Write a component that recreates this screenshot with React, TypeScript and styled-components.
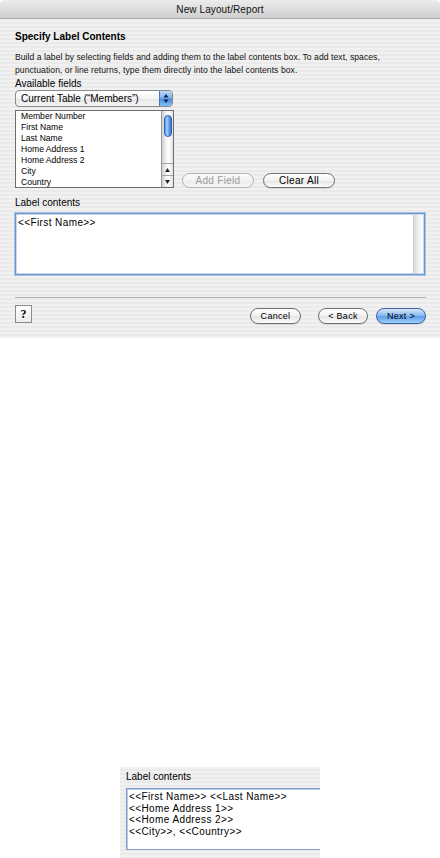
import React from "react";
import styled, { createGlobalStyle, css } from "styled-components";

const Global = createGlobalStyle`
  html, body { margin: 0; padding: 0; background: #ffffff; }
  body { font-family: "Liberation Sans", Arial, sans-serif; color: #000; }
  #root { width: 440px; }
`;

const stripes = css`
  background: repeating-linear-gradient(
    to bottom,
    #f1f1f1 0px,
    #f1f1f1 2px,
    #eaeaea 2px,
    #eaeaea 4px
  );
`;

const Page = styled.div`
  width: 440px;
  height: 858px;
  display: flex;
  flex-direction: column;
  overflow: hidden;
`;

const Dialog = styled.div`
  ${stripes};
  width: 440px;
  height: 338px;
  border-radius: 5px 5px 0 0;
  overflow: hidden;
  display: flex;
  flex-direction: column;
  flex-shrink: 0;
`;

const TitleBar = styled.div`
  height: 18px;
  border-bottom: 1px solid #a9a9a9;
  background: linear-gradient(to bottom, #ececec 0%, #dedede 50%, #cfcfcf 100%);
  display: flex;
  align-items: center;
  justify-content: center;
  font-size: 10px;
  color: #111;
  letter-spacing: 0.1px;
`;

const Body = styled.div`
  padding: 0 14px 0 15px;
  display: flex;
  flex-direction: column;
`;

const Heading = styled.div`
  margin-top: 12px;
  font-size: 10px;
  line-height: 12px;
  font-weight: bold;
  color: #000;
`;

const Description = styled.div`
  margin-top: 8px;
  font-size: 8.6px;
  line-height: 13px;
  color: #111;
  letter-spacing: 0.05px;
`;

const FieldLabel = styled.div<{ $gap: number }>`
  margin-top: ${(p) => p.$gap}px;
  font-size: 10px;
  line-height: 12px;
  color: #000;
`;

const Popup = styled.div`
  margin-top: 0px;
  width: 158px;
  height: 17px;
  box-sizing: border-box;
  border: 1px solid #8a8a8a;
  border-radius: 4px;
  background: linear-gradient(to bottom, #ffffff 0%, #f4f4f4 50%, #e6e6e6 51%, #f6f6f6 100%);
  display: flex;
  align-items: stretch;
  overflow: hidden;
`;

const PopupText = styled.div`
  flex: 1;
  font-size: 10px;
  line-height: 15px;
  padding-left: 5px;
  color: #000;
`;

const PopupArrows = styled.div`
  width: 12px;
  border-left: 1px solid #4a78b8;
  background: linear-gradient(to bottom, #bcd9f8 0%, #7fb1ec 45%, #4c8ee0 55%, #7fc0f8 100%);
  display: flex;
  align-items: center;
  justify-content: center;
`;

const ListRow = styled.div`
  margin-top: 3px;
  display: flex;
  align-items: flex-end;
`;

const ListBox = styled.div`
  width: 159px;
  height: 78px;
  box-sizing: border-box;
  border: 1px solid #6e6e6e;
  background: #fff;
  display: flex;
`;

const ListItems = styled.div`
  flex: 1;
  padding: 0 0 0 5px;
  display: flex;
  flex-direction: column;
`;

const ListItem = styled.div`
  font-size: 8.6px;
  line-height: 11px;
  color: #000;
  white-space: nowrap;
`;

const ScrollTrack = styled.div`
  width: 11px;
  border-left: 1px solid #9a9a9a;
  background: linear-gradient(to right, #d0d0d0 0%, #f4f4f4 40%, #ffffff 60%, #e2e2e2 100%);
  display: flex;
  flex-direction: column;
`;

const ScrollThumbArea = styled.div`
  flex: 1;
  padding: 4px 1px 0 1px;
`;

const ScrollThumb = styled.div`
  width: 8px;
  height: 22px;
  margin: 0 auto;
  box-sizing: border-box;
  border: 1px solid #2d5fae;
  border-radius: 4px;
  background: linear-gradient(to right, #5b96e4 0%, #a8d0fb 35%, #6aa8f0 60%, #2f74d2 100%);
`;

const ScrollArrow = styled.div`
  height: 11px;
  border-top: 1px solid #a6a6a6;
  display: flex;
  align-items: center;
  justify-content: center;
`;

const ButtonGroup = styled.div`
  display: flex;
  gap: 9px;
  margin-left: 8px;
`;

const PillButton = styled.div<{ $w: number; $h: number; $disabled?: boolean; $primary?: boolean; $fs?: number }>`
  width: ${(p) => p.$w}px;
  height: ${(p) => p.$h}px;
  box-sizing: border-box;
  border-radius: ${(p) => p.$h / 2}px;
  border: 1px solid ${(p) => (p.$disabled ? "#b4b4b4" : p.$primary ? "#3c63a3" : "#707070")};
  background: ${(p) =>
    p.$primary
      ? "linear-gradient(to bottom, #d3e6fb 0%, #8dbdf3 45%, #5fa0ec 55%, #9ed0fb 100%)"
      : p.$disabled
      ? "linear-gradient(to bottom, #fbfbfb 0%, #f3f3f3 50%, #ececec 51%, #f6f6f6 100%)"
      : "linear-gradient(to bottom, #ffffff 0%, #f2f2f2 50%, #e4e4e4 51%, #fbfbfb 100%)"};
  box-shadow: ${(p) => (p.$disabled ? "none" : "0 1px 1px rgba(0,0,0,0.12)")};
  display: flex;
  align-items: center;
  justify-content: center;
  font-size: ${(p) => p.$fs ?? 10}px;
  letter-spacing: 0.3px;
  color: ${(p) => (p.$disabled ? "#9c9c9c" : "#000")};
`;

const TextBox = styled.div<{ $h: number }>`
  margin-top: 4px;
  height: ${(p) => p.$h}px;
  box-sizing: border-box;
  border: 1px solid #6f95c8;
  box-shadow: 0 0 0 1px #a9c5ea, inset 0 0 0 1px #c7d8ee;
  background: #fff;
  display: flex;
  width: 410px;
`;

const TextContent = styled.div`
  flex: 1;
  padding: 3px 2px;
  font-size: 10px;
  line-height: 11.5px;
  letter-spacing: 0.4px;
  color: #000;
  white-space: pre;
`;

const EmptyScroll = styled.div`
  width: 10px;
  margin: 1px 1px 1px 0;
  background: linear-gradient(to right, #cdcdcd 0%, #e9e9e9 35%, #f6f6f6 70%, #fbfbfb 100%);
`;

const Separator = styled.div`
  margin-top: 22px;
  height: 1px;
  background: #b0b0b0;
  width: 411px;
`;

const Footer = styled.div`
  margin-top: 7px;
  display: flex;
  align-items: flex-start;
`;

const HelpButton = styled.div`
  width: 17px;
  height: 18px;
  box-sizing: border-box;
  border: 1px solid #8c8c8c;
  background: linear-gradient(to bottom, #ffffff, #ececec);
  display: flex;
  align-items: center;
  justify-content: center;
  font-family: "Liberation Serif", "Times New Roman", serif;
  font-weight: bold;
  font-size: 12px;
  color: #000;
`;

const FooterButtons = styled.div`
  margin-left: auto;
  margin-top: 3px;
  display: flex;
  align-items: center;
`;

const Spacer = styled.div<{ $w: number }>`
  width: ${(p) => p.$w}px;
`;

const InsetArea = styled.div`
  margin-top: 429px;
  margin-left: 120px;
  width: 200px;
  height: 91px;
  ${stripes};
  padding: 4px 0 0 6px;
  box-sizing: border-box;
  overflow: hidden;
  display: flex;
  flex-direction: column;
`;

const InsetLabel = styled.div`
  font-size: 10px;
  line-height: 12px;
  color: #000;
`;

const InsetBox = styled.div`
  margin-top: 5px;
  width: 220px;
  height: 62px;
  box-sizing: border-box;
  border: 1px solid #7f9cc4;
  border-right: none;
  box-shadow: inset 1px 1px 0 #b8cde8;
  background: #fff;
  padding: 2px 2px;
  font-size: 10px;
  line-height: 11.5px;
  letter-spacing: 0.4px;
  color: #000;
  white-space: pre;
`;

const Tri = ({ up, size = 5, color = "#222" }: { up: boolean; size?: number; color?: string }) => (
  <svg width={size} height={size - 1} viewBox="0 0 6 5">
    {up ? <polygon points="3,0 6,5 0,5" fill={color} /> : <polygon points="0,0 6,0 3,5" fill={color} />}
  </svg>
);

const PopupArrowIcon = () => (
  <svg width="6" height="11" viewBox="0 0 6 11">
    <polygon points="3,1 5.5,4.5 0.5,4.5" fill="#10234a" />
    <polygon points="0.5,6.5 5.5,6.5 3,10" fill="#10234a" />
  </svg>
);

const fields = ["Member Number", "First Name", "Last Name", "Home Address 1", "Home Address 2", "City", "Country"];

export default function App() {
  return (
    <Page>
      <Global />
      <Dialog>
        <TitleBar>New Layout/Report</TitleBar>
        <Body>
          <Heading>Specify Label Contents</Heading>
          <Description>
            Build a label by selecting fields and adding them to the label contents box. To add text, spaces,
            <br />
            punctuation, or line returns, type them directly into the label contents box.
          </Description>
          <FieldLabel $gap={1}>Available fields</FieldLabel>
          <Popup>
            <PopupText>Current Table (“Members”)</PopupText>
            <PopupArrows>
              <PopupArrowIcon />
            </PopupArrows>
          </Popup>
          <ListRow>
            <ListBox>
              <ListItems>
                {fields.map((f) => (
                  <ListItem key={f}>{f}</ListItem>
                ))}
              </ListItems>
              <ScrollTrack>
                <ScrollThumbArea>
                  <ScrollThumb />
                </ScrollThumbArea>
                <ScrollArrow>
                  <Tri up />
                </ScrollArrow>
                <ScrollArrow>
                  <Tri up={false} />
                </ScrollArrow>
              </ScrollTrack>
            </ListBox>
            <ButtonGroup>
              <PillButton $w={72} $h={15} $disabled>
                Add Field
              </PillButton>
              <PillButton $w={72} $h={15}>
                Clear All
              </PillButton>
            </ButtonGroup>
          </ListRow>
          <FieldLabel $gap={9}>Label contents</FieldLabel>
          <TextBox $h={62}>
            <TextContent>{"<<First Name>>"}</TextContent>
            <EmptyScroll />
          </TextBox>
          <Separator />
          <Footer>
            <HelpButton>?</HelpButton>
            <FooterButtons>
              <PillButton $w={51} $h={16} $fs={9}>
                Cancel
              </PillButton>
              <Spacer $w={17} />
              <PillButton $w={50} $h={16} $fs={9}>
                {"< Back"}
              </PillButton>
              <Spacer $w={8} />
              <PillButton $w={50} $h={16} $fs={9} $primary>
                {"Next >"}
              </PillButton>
            </FooterButtons>
          </Footer>
        </Body>
      </Dialog>
      <InsetArea>
        <InsetLabel>Label contents</InsetLabel>
        <InsetBox>
          {"<<First Name>> <<Last Name>>\n<<Home Address 1>>\n<<Home Address 2>>\n<<City>>, <<Country>>"}
        </InsetBox>
      </InsetArea>
    </Page>
  );
}
